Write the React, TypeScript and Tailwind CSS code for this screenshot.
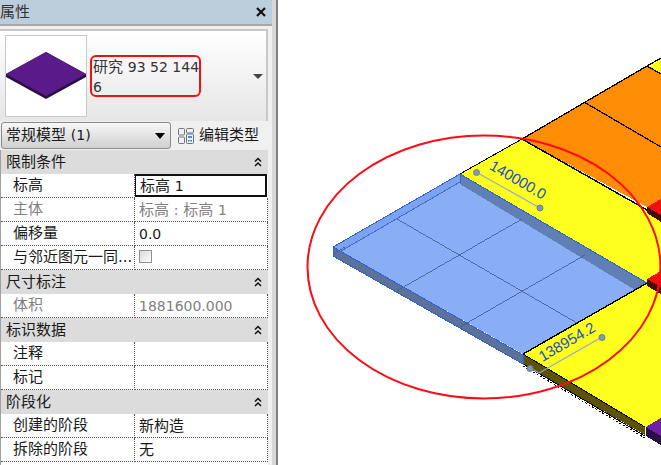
import { ReactNode } from "react";

type Row = { label: string; value?: ReactNode; muted?: boolean; active?: boolean; check?: boolean };
type Section = { title: string; rows: Row[] };

const Num = ({ children }: { children: ReactNode }) => <span className="text-[14px]">{children}</span>;

const sections: Section[] = [
  {
    title: "限制条件",
    rows: [
      { label: "标高", value: <>标高 <Num>1</Num></>, active: true },
      { label: "主体", value: <>标高 <Num>:</Num> 标高 <Num>1</Num></>, muted: true },
      { label: "偏移量", value: <Num>0.0</Num> },
      { label: "与邻近图元一同...", check: true },
    ],
  },
  { title: "尺寸标注", rows: [{ label: "体积", value: <Num>1881600.000</Num>, muted: true }] },
  { title: "标识数据", rows: [{ label: "注释" }, { label: "标记" }] },
  {
    title: "阶段化",
    rows: [
      { label: "创建的阶段", value: "新构造" },
      { label: "拆除的阶段", value: "无" },
    ],
  },
];

function Collapse() {
  return (
    <svg width="8" height="10" viewBox="0 0 8 10" fill="none" stroke="#111" strokeWidth="1.5">
      <path d="M1 4.5 L4 1.5 L7 4.5" />
      <path d="M1 9 L4 6 L7 9" />
    </svg>
  );
}

function EditTypeIcon() {
  return (
    <svg width="16" height="16" viewBox="0 0 16 16" fill="none" stroke="#6b7280">
      <rect x="0.5" y="0.5" width="6" height="6.5" rx="1" />
      <rect x="0.5" y="9" width="6" height="6.5" rx="1" />
      <rect x="8.5" y="0.5" width="7" height="4.5" rx="1" />
      <rect x="8.5" y="6" width="7" height="9.5" rx="1" />
      <rect x="10" y="8" width="4" height="2" fill="#4a90d9" stroke="none" />
      <rect x="10" y="12" width="1.5" height="1.5" fill="#4a6fa0" stroke="none" />
      <rect x="12.5" y="12" width="1.5" height="1.5" fill="#4a6fa0" stroke="none" />
    </svg>
  );
}

function PropertyRow({ row }: { row: Row }) {
  const tone = row.muted ? "text-[#808080]" : "text-[#1a1a1a]";
  return (
    <div className={`flex h-6 ${tone}`}>
      <div className="w-[134px] pl-3 leading-[22px] whitespace-nowrap border-r border-b border-dotted border-[#555] overflow-hidden">
        {row.label}
      </div>
      {row.active ? (
        <div className="w-[132px] pl-1 leading-[20px] border-2 border-[#111] border-l-[1.5px] h-[23px]">{row.value}</div>
      ) : (
        <div className="w-[133px] pl-1 leading-[22px] border-r border-b border-dotted border-[#555] flex items-center">
          {row.check ? (
            <span className="block w-[13px] h-[13px] border border-[#8f8f8f] bg-gradient-to-br from-[#d8d8d8] to-white mb-[3px]" />
          ) : (
            <span>{row.value}</span>
          )}
        </div>
      )}
    </div>
  );
}

function PropertiesPanel() {
  return (
    <aside className="w-[272px] h-full shrink-0 flex flex-col bg-[#f0f0f0]">
      <div className="h-6 shrink-0 bg-[#bccddc] flex items-center justify-between pr-[6px] text-[15px] text-[#333]">
        <span className="leading-[22px]">属性</span>
        <svg width="10" height="10" viewBox="0 0 10 10" stroke="#111" strokeWidth="2.2">
          <path d="M1 1 L9 9 M9 1 L1 9" />
        </svg>
      </div>
      <div className="h-[2px] shrink-0 bg-[#a8a8a8]" />
      <div className="h-[3px] shrink-0" />
      <div className="w-[268px] h-[92px] shrink-0 flex items-center border-t-2 border-r-2 border-[#c8c8c8] bg-gradient-to-b from-white to-[#e6e6e6] pl-[5px]">
        <div className="w-[82px] h-[82px] shrink-0 bg-white border border-[#c8c8c8] flex items-center">
          <svg width="80" height="48" viewBox="0 0 80 48">
            <path d="M0 22 L40 0 L80 22 L80 25 L40 47 L0 25 Z" fill="#2a1045" />
            <path d="M0 22 L40 0 L80 22 L40 44 Z" fill="#5a1a8a" />
          </svg>
        </div>
        <div className="ml-[3px] w-[111px] h-[42px] shrink-0 border-2 border-[#ee1111] rounded-[6px] pl-[1px] text-[#333] text-[15px] leading-[20px] whitespace-nowrap">
          研究 <Num>93 52 144</Num>
          <br />
          <Num>6</Num>
        </div>
        <span className="ml-[52px] w-0 h-0 border-x-[5px] border-x-transparent border-t-[5px] border-t-[#444]" />
      </div>
      <div className="h-[29px] shrink-0 flex items-center pl-[1px]">
        <div className="w-[170px] h-[27px] flex items-center justify-between pl-[4px] pr-[5px] border border-[#8a8a8a] rounded-[3px] bg-gradient-to-b from-[#f8f8f8] to-[#cfcfcf] text-[15px] text-[#1a1a1a]">
          <span>常规模型 <Num>(1)</Num></span>
          <span className="w-0 h-0 border-x-[5px] border-x-transparent border-t-[6px] border-t-black" />
        </div>
        <span className="ml-[7px]">
          <EditTypeIcon />
        </span>
        <span className="ml-[5px] text-[15px] text-[#1a1a1a]">编辑类型</span>
      </div>
      <div className="flex-1 w-[268px] bg-white border-l border-[#a0a0a0] text-[15px]">
        {sections.map((s) => (
          <div key={s.title}>
            <div className="h-6 bg-[#dcdcdc] flex items-center justify-between pl-[5px] pr-[6px] text-[#1a1a1a]">
              <span>{s.title}</span>
              <Collapse />
            </div>
            {s.rows.map((r) => (
              <PropertyRow key={r.label} row={r} />
            ))}
          </div>
        ))}
      </div>
    </aside>
  );
}

function ModelView() {
  return (
    <svg width="383" height="465" viewBox="278 0 383 465" className="block">
      <g shapeRendering="crispEdges">
        <polygon points="522,139 647,66 661,74 661,199 647,207" fill="#ff8c05" />
        <polygon points="647,66 661,58 661,74" fill="#ffff1e" />
        <polyline points="522,139 647,66 661,58" fill="none" stroke="#000" strokeWidth="1.3" />
        <path d="M647 66 L661 74 M584 102 L661 147" stroke="#000" strokeWidth="1.2" />
        <polygon points="460,174 522,139 647,210 661,218 661,291 647,283" fill="#ffff1e" />
        <path d="M522 139 L647 210" stroke="#000" strokeWidth="1.5" />
        <polyline points="460,174 522,139" fill="none" stroke="#000" strokeWidth="1" />
        <polygon points="647,207 661,199 661,215" fill="#ee1111" />
        <polygon points="647,207 661,215 661,222 647,213" fill="#4a0808" />
        <polygon points="523,354 647,283 661,291 661,419 645,428" fill="#ffff1e" />
        <polygon points="523,354 645,427 645,435 523,364" fill="#5c5308" />
        <path d="M523 354 L645 427 M523 364 L645 436" stroke="#000" strokeWidth="1" />
        <polyline points="523,366 645,438" fill="none" stroke="#000" strokeWidth="1" strokeDasharray="2 2" />
        <polygon points="647,279 661,271 661,287" fill="#ee1111" />
        <polygon points="647,279 661,287 661,294 647,286" fill="#4a0808" />
        <polygon points="646,427 661,418 661,436" fill="#6f1fa8" />
        <polygon points="646,427 661,436 661,445 646,436" fill="#2a1045" />
        <path d="M647 283 L523 354" stroke="#000" strokeWidth="1.5" />
        <polygon points="333,247 460,174 647,283 523,354" fill="#8aaef5" />
        <polygon points="460,174 647,283 635,290 460,184" fill="#5f7fb5" />
        <polygon points="333,247 460,174 460,182 341,251" fill="#7da3ee" />
        <polygon points="333,247 523,355 523,364 333,256" fill="#5e7199" />
        <path d="M460 182 L341 251" stroke="#3f6ed0" strokeWidth="1" />
        <path d="M397 219 L577 323 M522 219 L395 292 M585 255 L460 327 M333 254 L345 247" stroke="#3c5890" strokeWidth="0.8" />
        <path d="M333 247 L460 174 L647 283 M333 247 L523 355 M333 247 L333 256 L523 364 L523 355 M460 174 L460 183" fill="none" stroke="#2a62d8" strokeWidth="1" />
        <path d="M647 283 L523 354" stroke="#000" strokeWidth="1.3" />
      </g>
      <path d="M476 172 L540 208 M530 368 L539 373 M539 373 L602 337" stroke="#8fa8e0" strokeWidth="1.2" fill="none" />
      <g fill="#7f9ab0" stroke="#6b8090">
        <circle cx="476.5" cy="172.5" r="3" />
        <circle cx="540" cy="208" r="3" />
        <circle cx="530" cy="368.5" r="3" />
        <circle cx="602" cy="337.5" r="3" />
      </g>
      <text x="518" y="185" textAnchor="middle" transform="rotate(30 518 180)" fontFamily="'Liberation Sans', sans-serif" fontSize="15" fill="#1a4fc0">
        140000.0
      </text>
      <text x="567" y="347" textAnchor="middle" transform="rotate(-30 567 342)" fontFamily="'Liberation Sans', sans-serif" fontSize="15" fill="#1a4fc0">
        138954.2
      </text>
      <ellipse cx="484" cy="267" rx="176.5" ry="131.5" fill="none" stroke="#ff0a14" strokeWidth="2" />
    </svg>
  );
}

export default function App() {
  return (
    <div className="w-[661px] h-[465px] flex overflow-hidden bg-white font-['DejaVu_Sans','Noto_Sans_CJK_SC',sans-serif]">
      <PropertiesPanel />
      <div className="w-[6px] h-full shrink-0 bg-[#d8d8d8] border-r-2 border-[#7f7f7f]" />
      <ModelView />
    </div>
  );
}
